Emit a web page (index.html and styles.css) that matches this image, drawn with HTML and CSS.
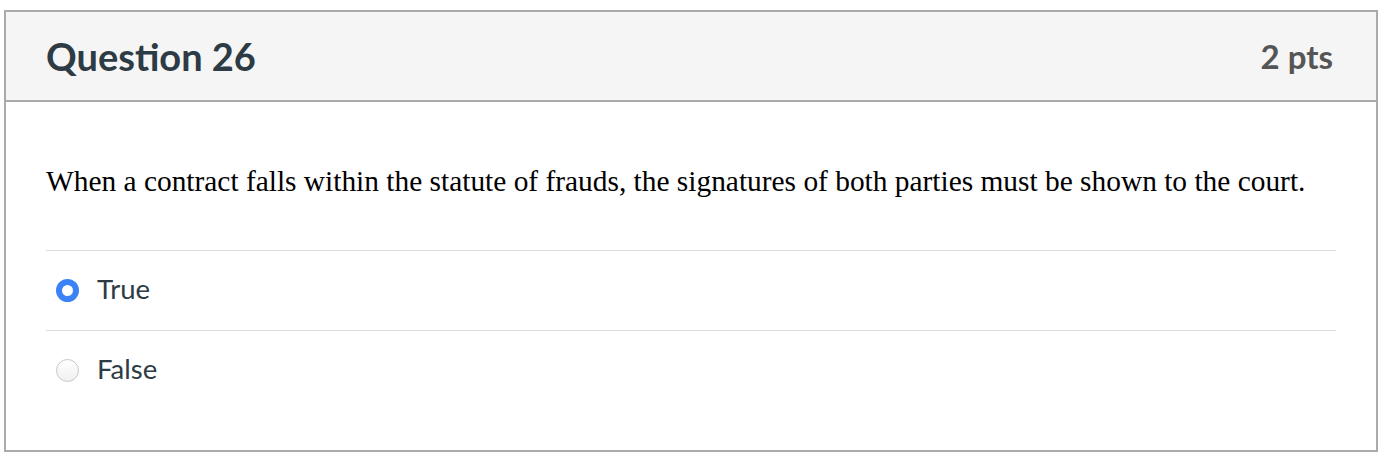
FILE: index.html
```html
<!DOCTYPE html>
<html>
<head>
<meta charset="utf-8">
<link rel="stylesheet" href="styles.css">
</head>
<body>
<div class="card">
  <div class="header">
    <h2 class="title">Question 26</h2>
    <span class="pts">2 pts</span>
  </div>
  <div class="content">
    <p class="question">When a contract falls within the statute of frauds, the signatures of both parties must be shown to the court.</p>
    <div class="answers">
      <label class="answer">
        <span class="radio checked"></span>
        <span class="label">True</span>
      </label>
      <label class="answer">
        <span class="radio"></span>
        <span class="label">False</span>
      </label>
    </div>
  </div>
</div>
</body>
</html>
```
FILE: styles.css
```css
html, body {
  margin: 0;
  padding: 0;
  background: #fff;
}
.card {
  margin: 10px 0 0 4px;
  width: 1370px;
  border: 2px solid #aaaaaa;
  box-sizing: content-box;
}
.header {
  height: 88px;
  background: #f5f5f5;
  border-bottom: 2px solid #aaaaaa;
  display: flex;
  align-items: center;
  justify-content: space-between;
  padding: 0 43px 0 40px;
}
.title {
  margin: 0;
  font-family: Lato, sans-serif;
  font-weight: 700;
  font-size: 38px;
  color: #2d3b45;
}
.pts {
  font-family: Lato, sans-serif;
  font-weight: 700;
  font-size: 33px;
  color: #555555;
}
.content {
  padding: 0 40px 40px;
}
.question {
  margin: 0;
  padding: 63px 0 52px;
  font-family: "Liberation Serif", serif;
  font-size: 29.4px;
  color: #000;
  border-bottom: 1px solid #dddddd;
}
.answers {
  display: flex;
  flex-direction: column;
}
.answer {
  height: 79px;
  display: flex;
  align-items: center;
  gap: 18px;
  padding-left: 10px;
  border-bottom: 1px solid #dddddd;
  font-family: Lato, sans-serif;
  font-size: 27.5px;
  color: #2d3b45;
}
.answer:last-child {
  border-bottom: none;
}
.label {
  margin-bottom: 5px;
}
.radio {
  width: 23px;
  height: 23px;
  border-radius: 50%;
  box-sizing: border-box;
  border: 1px solid #c8c8c8;
  background: linear-gradient(#fff, #f0f0f0);
  flex: none;
}
.radio.checked {
  border: 6px solid #3b82f6;
  background: #fff;
}
```
